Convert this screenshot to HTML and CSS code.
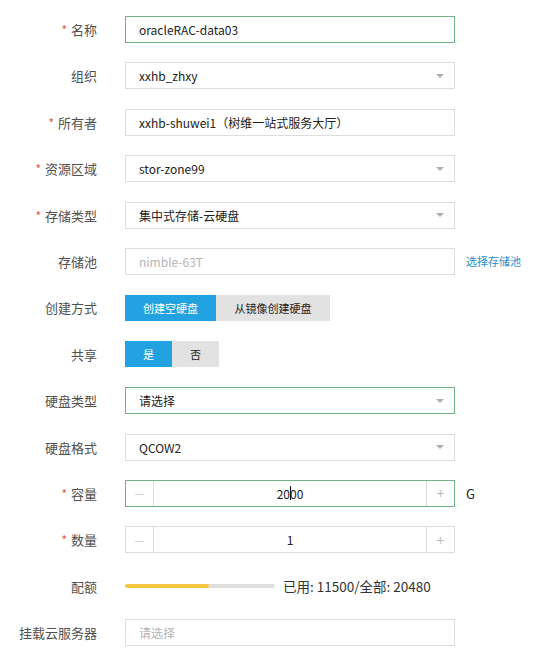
FILE: index.html
```html
<!DOCTYPE html>
<html lang="zh-CN">
<head>
<meta charset="utf-8">
<title>创建云硬盘</title>
<link rel="stylesheet" href="styles.css">
</head>
<body>
<div class="form">
  <div class="row">
    <label class="label"><span class="req">*</span>名称</label>
    <div class="field input focus">oracleRAC-data03</div>
  </div>
  <div class="row">
    <label class="label">组织</label>
    <div class="field input select"><span>xxhb_zhxy</span><i class="arrow"></i></div>
  </div>
  <div class="row">
    <label class="label"><span class="req">*</span>所有者</label>
    <div class="field input">xxhb-shuwei1（树维一站式服务大厅）</div>
  </div>
  <div class="row">
    <label class="label"><span class="req">*</span>资源区域</label>
    <div class="field input select"><span>stor-zone99</span><i class="arrow"></i></div>
  </div>
  <div class="row">
    <label class="label"><span class="req">*</span>存储类型</label>
    <div class="field input select"><span>集中式存储-云硬盘</span><i class="arrow"></i></div>
  </div>
  <div class="row">
    <label class="label">存储池</label>
    <div class="field input disabled">nimble-63T</div>
    <a class="extra link">选择存储池</a>
  </div>
  <div class="row">
    <label class="label">创建方式</label>
    <div class="btns">
      <span class="btn on wide">创建空硬盘</span><span class="btn off wider">从镜像创建硬盘</span>
    </div>
  </div>
  <div class="row">
    <label class="label">共享</label>
    <div class="btns">
      <span class="btn on small">是</span><span class="btn off small">否</span>
    </div>
  </div>
  <div class="row">
    <label class="label">硬盘类型</label>
    <div class="field input select focus"><span>请选择</span><i class="arrow"></i></div>
  </div>
  <div class="row">
    <label class="label">硬盘格式</label>
    <div class="field input select"><span>QCOW2</span><i class="arrow"></i></div>
  </div>
  <div class="row">
    <label class="label"><span class="req">*</span>容量</label>
    <div class="field number focus">
      <span class="step minus">—</span>
      <span class="value">20<span class="caret"></span>00</span>
      <span class="step plus">+</span>
    </div>
    <span class="extra unit">G</span>
  </div>
  <div class="row">
    <label class="label"><span class="req">*</span>数量</label>
    <div class="field number">
      <span class="step minus">—</span>
      <span class="value">1</span>
      <span class="step plus">+</span>
    </div>
  </div>
  <div class="row">
    <label class="label">配额</label>
    <div class="quota">
      <div class="bar"><div class="fill" style="width:56.15%"></div></div>
      <span class="quota-text">已用: 11500/全部: 20480</span>
    </div>
  </div>
  <div class="row">
    <label class="label">挂载云服务器</label>
    <div class="field input placeholder">请选择</div>
  </div>
</div>
</body>
</html>
```
FILE: styles.css
```css
html, body {
  margin: 0;
  padding: 0;
  background: #ffffff;
}
body {
  font-family: "Noto Sans CJK SC", "Noto Sans", sans-serif;
  color: #333333;
}
.form {
  display: flex;
  flex-direction: column;
  gap: 19.4px;
  padding-top: 16px;
}
.row {
  display: flex;
  align-items: center;
  height: 27px;
}
.label {
  width: 97px;
  margin-right: 28px;
  text-align: right;
  font-size: 13px;
  color: #505050;
  flex-shrink: 0;
  line-height: 27px;
}
.req {
  color: #e0534a;
  font-size: 12px;
  margin-right: 4px;
}
.field {
  box-sizing: border-box;
  width: 330px;
  height: 27px;
  border: 1px solid #dddddd;
  background: #ffffff;
  flex-shrink: 0;
}
.input {
  display: flex;
  align-items: center;
  padding: 0 13px;
  font-size: 12px;
  color: #222222;
}
.focus {
  border-color: #6fb384;
}
.select {
  justify-content: space-between;
}
.arrow {
  width: 0;
  height: 0;
  border-left: 4px solid transparent;
  border-right: 4px solid transparent;
  border-top: 4px solid #b0b0b0;
  margin-right: -3px;
}
.disabled, .placeholder {
  color: #b5b5b5;
}
.extra {
  margin-left: 11px;
}
.link {
  color: #2b90cf;
  font-size: 11px;
  cursor: pointer;
}
.unit {
  font-size: 13px;
  color: #222222;
}
.btns {
  display: flex;
  height: 26px;
}
.btn {
  display: flex;
  align-items: center;
  justify-content: center;
  font-size: 11px;
  height: 26px;
}
.btn.on {
  background: #22a2e1;
  color: #ffffff;
}
.btn.off {
  background: #e2e2e2;
  color: #222222;
}
.wide { width: 91px; }
.wider { width: 114px; }
.small { width: 47px; }
.number {
  display: flex;
  align-items: stretch;
}
.step {
  width: 27px;
  display: flex;
  align-items: center;
  justify-content: center;
  color: #cccccc;
  font-size: 11px;
}
.minus {
  border-right: 1px solid #dddddd;
}
.plus {
  border-left: 1px solid #dddddd;
  font-size: 14px;
  color: #bbbbbb;
}
.value {
  flex: 1;
  display: flex;
  align-items: center;
  justify-content: center;
  font-size: 12px;
  color: #222222;
}
.caret {
  display: inline-block;
  width: 1px;
  height: 14px;
  background: #111111;
  margin: 0 -1px 0 0;
}
.quota {
  display: flex;
  align-items: center;
}
.bar {
  width: 150px;
  height: 4px;
  border-radius: 2px;
  background: #dedede;
  overflow: hidden;
}
.fill {
  height: 100%;
  background: #f3c73f;
  border-radius: 2px;
}
.quota-text {
  margin-left: 8px;
  font-size: 13.5px;
  color: #333333;
}
```
